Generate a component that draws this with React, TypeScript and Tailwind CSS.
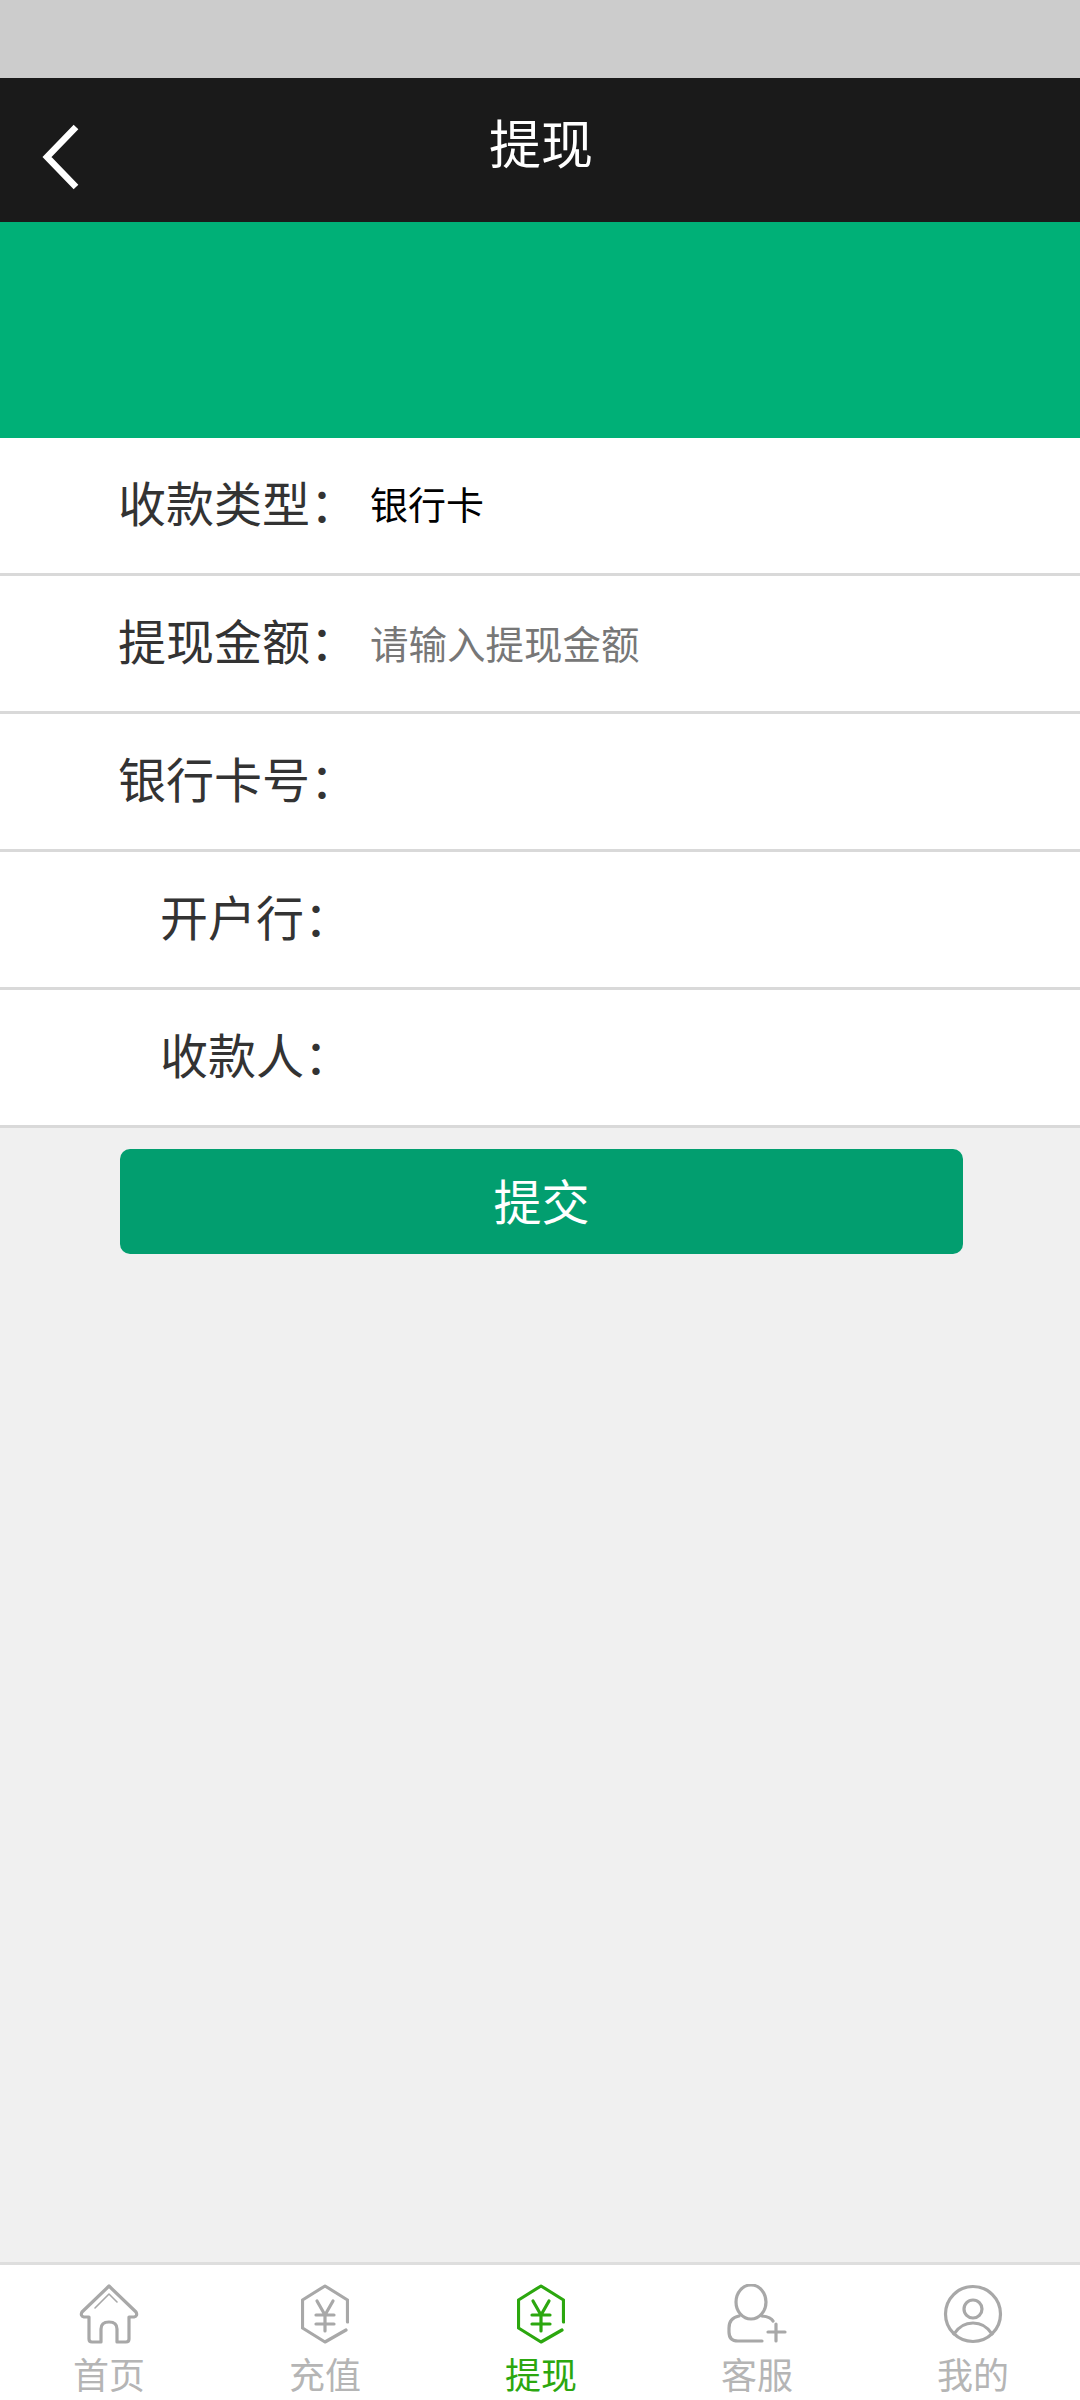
import type { ReactNode } from 'react';

const font = { fontFamily: '"Noto Sans CJK SC", "Noto Sans", sans-serif' };

function HomeIcon() {
  return (
    <svg width="60" height="60" viewBox="0 0 60 60" fill="none" stroke="currentColor" strokeWidth="3.2" strokeLinecap="round" strokeLinejoin="round">
      <path d="M30 2 L57 28 Q59 32 55 33 L50 33 L50 55 Q50 58 47 58 L38 58 L38 45 Q38 38 30 38 Q22 38 22 45 L22 58 L13 58 Q10 58 10 55 L10 33 L5 33 Q1 32 3 28 Z" />
      <path d="M16 24 L30 10 L38 18" strokeWidth="1.6" />
    </svg>
  );
}

function YenHexIcon() {
  return (
    <svg width="48" height="60" viewBox="0 0 48 60" fill="none" stroke="currentColor" strokeWidth="3.2" strokeLinecap="round" strokeLinejoin="round">
      <path d="M46.5 38 L46.5 16 L24 2 L1.5 16 L1.5 44 L24 58 L45 46" />
      <path d="M16 17 L24 31 L32 17 M15 31 L33 31 M15 40 L33 40 M24 31 L24 47" />
    </svg>
  );
}

function UserPlusIcon() {
  return (
    <svg width="60" height="60" viewBox="0 0 60 60" fill="none" stroke="currentColor" strokeWidth="3.2" strokeLinecap="round" strokeLinejoin="round">
      <ellipse cx="24" cy="18" rx="15" ry="17" />
      <path d="M35 32 Q44 33 46 37 M12 32 Q2 34 2 44 L2 48 Q2 57 11 57 L35 57" />
      <path d="M49 40 L49 57 M41 48 L58 48" />
    </svg>
  );
}

function UserCircleIcon() {
  return (
    <svg width="60" height="60" viewBox="0 0 60 60" fill="none" stroke="currentColor" strokeWidth="3.2" strokeLinecap="round">
      <circle cx="30" cy="30" r="27.5" />
      <circle cx="30" cy="25" r="9" />
      <path d="M11 50 Q18 39 30 39 Q42 39 49 50" />
    </svg>
  );
}

const fields = [
  { label: '收款类型：', value: '银行卡', labelCls: 'pl-[118px]', valueCls: 'mt-[4px] text-[38px] text-black' },
  { label: '提现金额：', value: '请输入提现金额', labelCls: 'pl-[118px]', valueCls: 'mt-[7px] text-[38.5px] text-[#777777]' },
  { label: '银行卡号：', value: '', labelCls: 'pl-[118px]', valueCls: '' },
  { label: '开户行：', value: '', labelCls: 'pl-[160px]', valueCls: '' },
  { label: '收款人：', value: '', labelCls: 'pl-[160px]', valueCls: '' },
];

const tabs: { name: string; icon: ReactNode; active?: boolean }[] = [
  { name: '首页', icon: <HomeIcon /> },
  { name: '充值', icon: <YenHexIcon /> },
  { name: '提现', icon: <YenHexIcon />, active: true },
  { name: '客服', icon: <UserPlusIcon /> },
  { name: '我的', icon: <UserCircleIcon /> },
];

export default function App() {
  return (
    <div className="flex h-[2400px] w-[1080px] flex-col overflow-hidden bg-[#f0f0f0]" style={font}>
      <div className="h-[78px] bg-[#cccccc]" />

      {/* Header */}
      <div className="relative flex h-[144px] items-center justify-center bg-[#1a1a1a] pb-[16px] pl-[2px]">
        <svg className="absolute left-[40px] top-[46px]" width="40" height="66" viewBox="0 0 40 66" fill="none" stroke="white" strokeWidth="6.5">
          <path d="M36 3 L7 33 L36 63" />
        </svg>
        <span className="text-[52px] leading-none text-white">提现</span>
      </div>

      <div className="h-[216px] bg-[#00b077]" />

      {/* Form */}
      <div className="flex flex-col">
        {fields.map((f) => (
          <div key={f.label} className="flex h-[138px] items-center border-b-[3px] border-[#d9d9d9] bg-white pb-[10px]">
            <span className={`w-[370px] shrink-0 text-[48px] leading-none whitespace-nowrap text-[#333333] ${f.labelCls}`}>{f.label}</span>
            {f.value && <span className={`leading-none ${f.valueCls}`}>{f.value}</span>}
          </div>
        ))}
      </div>

      <div className="px-[120px] pt-[21px]">
        <button className="flex h-[105px] w-[843px] items-center justify-center rounded-[10px] bg-[#029e6f] pb-[6px] text-[48px] leading-none text-white">
          提交
        </button>
      </div>

      <div className="flex-1" />

      {/* Tab bar */}
      <div className="flex h-[138px] border-t-[3px] border-[#dedede] bg-white">
        {tabs.map((t) => (
          <div key={t.name} className="flex w-[216px] flex-col items-center overflow-hidden pt-[19px] pl-[2px]">
            <div className={`flex h-[60px] items-center justify-center ${t.active ? 'text-[#2ca70f]' : 'text-[#a8a8a8]'}`}>{t.icon}</div>
            <span className={`mt-[11px] text-[36px] leading-none ${t.active ? 'text-[#2ca70f]' : 'text-[#b5b5b5]'}`}>{t.name}</span>
          </div>
        ))}
      </div>
    </div>
  );
}
